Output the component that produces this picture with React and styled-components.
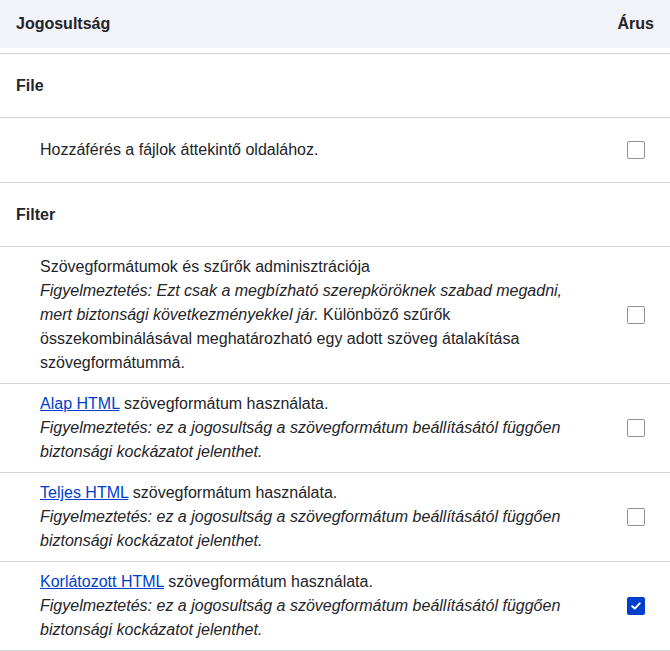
import React from 'react';
import styled, { createGlobalStyle } from 'styled-components';

const GlobalStyle = createGlobalStyle`
  body {
    margin: 0;
    background: #fff;
    font-family: "Liberation Sans", Arial, sans-serif;
    color: #232429;
  }
`;

const groups = [
  {
    name: 'File',
    perms: [
      { text: <>Hozzáférés a fájlok áttekintő oldalához.</>, checked: false },
    ],
  },
  {
    name: 'Filter',
    perms: [
      {
        text: (
          <>
            Szövegformátumok és szűrők adminisztrációja
            <br />
            <em>Figyelmeztetés: Ezt csak a megbízható szerepköröknek szabad megadni, mert biztonsági következményekkel jár.</em>{' '}
            Különböző szűrők összekombinálásával meghatározható egy adott szöveg átalakítása szövegformátummá.
          </>
        ),
        checked: false,
      },
      { link: 'Alap HTML', checked: false },
      { link: 'Teljes HTML', checked: false },
      { link: 'Korlátozott HTML', checked: true },
    ],
  },
];

const Table = styled.div`
  width: 670px;
  font-size: 16px;
  line-height: 24px;
`;

const Head = styled.div`
  display: flex;
  justify-content: space-between;
  align-items: center;
  height: 48px;
  padding: 0 16px;
  background: #f2f3f8;
  font-weight: 700;
  margin-bottom: 5px;
`;

const Row = styled.div`
  display: flex;
  align-items: center;
  min-height: ${p => (p.group ? 63 : 48)}px;
  border-top: 1px solid #d3d4d9;
  &:last-child {
    border-bottom: 1px solid #d3d4d9;
  }
`;

const GroupName = styled.div`
  padding: 0 16px;
  font-weight: 700;
`;

const Desc = styled.div`
  flex: 1;
  padding: ${p => (p.single ? '20px' : '8px')} 30px ${p => (p.single ? '20px' : '8px')} 40px;
  max-width: 526px;

  em {
    font-style: italic;
  }
`;

const Link = styled.a`
  color: #003ecc;
  text-decoration: underline;
`;

const CheckCell = styled.div`
  display: flex;
  justify-content: center;
  width: 36px;
  margin-left: auto;
  margin-right: 16px;
`;

const Box = styled.span`
  display: inline-flex;
  align-items: center;
  justify-content: center;
  width: 18px;
  height: 18px;
  box-sizing: border-box;
  border-radius: 2px;
  border: 1px solid ${p => (p.checked ? '#003ecc' : '#8e929c')};
  background: ${p => (p.checked ? '#003ecc' : '#fff')};
`;

const Check = ({ checked }) => (
  <Box checked={checked}>
    {checked && (
      <svg width="12" height="12" viewBox="0 0 12 12">
        <path d="M2.2 6.2 L4.8 8.6 L9.8 3.4" fill="none" stroke="#fff" strokeWidth="2" strokeLinecap="round" strokeLinejoin="round" />
      </svg>
    )}
  </Box>
);

const linkText = name => (
  <>
    <Link href="#">{name}</Link> szövegformátum használata.
    <br />
    <em>Figyelmeztetés: ez a jogosultság a szövegformátum beállításától függően biztonsági kockázatot jelenthet.</em>
  </>
);

export default function App() {
  return (
    <>
      <GlobalStyle />
      <Table>
        <Head>
          <span>Jogosultság</span>
          <span>Árus</span>
        </Head>
        {groups.map(g => (
          <React.Fragment key={g.name}>
            <Row group>
              <GroupName>{g.name}</GroupName>
            </Row>
            {g.perms.map((p, i) => (
              <Row key={i}>
                <Desc single={!p.link && g.name === 'File'}>{p.link ? linkText(p.link) : p.text}</Desc>
                <CheckCell>
                  <Check checked={p.checked} />
                </CheckCell>
              </Row>
            ))}
          </React.Fragment>
        ))}
      </Table>
    </>
  );
}
